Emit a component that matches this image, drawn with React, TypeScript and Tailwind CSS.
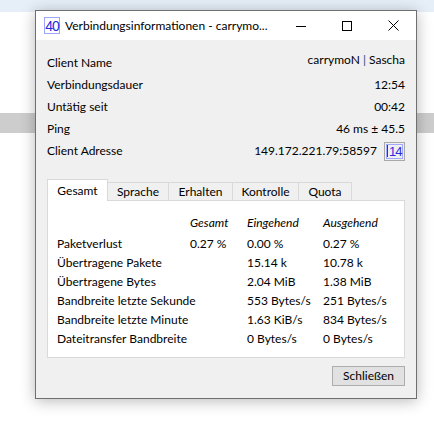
import React from "react";

const font = { fontFamily: 'Lato, "Liberation Sans", Arial, sans-serif' };

const infoRows: { label: string; value: React.ReactNode; top?: boolean }[] = [
  { label: "Client Name", value: <span>carrymoN <span className="text-[#2c4a7a]">|</span> Sascha</span>, top: true },
  { label: "Verbindungsdauer", value: "12:54" },
  { label: "Untätig seit", value: "00:42" },
  { label: "Ping", value: "46 ms ± 45.5" },
];

const tabs = ["Gesamt", "Sprache", "Erhalten", "Kontrolle", "Quota"];

const stats: [string, string, string, string][] = [
  ["Paketverlust", "0.27 %", "0.00 %", "0.27 %"],
  ["Übertragene Pakete", "", "15.14 k", "10.78 k"],
  ["Übertragene Bytes", "", "2.04 MiB", "1.38 MiB"],
  ["Bandbreite letzte Sekunde", "", "553 Bytes/s", "251 Bytes/s"],
  ["Bandbreite letzte Minute", "", "1.63 KiB/s", "834 Bytes/s"],
  ["Dateitransfer Bandbreite", "", "0 Bytes/s", "0 Bytes/s"],
];

function TitleBar() {
  return (
    <div className="flex h-[29px] items-center whitespace-nowrap bg-white">
      <div className="ml-[8px] flex h-[17px] w-[16px] items-center justify-center border border-[#9da6ff] font-['Liberation_Sans',sans-serif] text-[14px] leading-none tracking-[-1px] text-[#2a2ae0]">
        40
      </div>
      <span className="ml-[5px] text-[12px] text-black">Verbindungsinformationen - carrymo...</span>
      <div className="ml-auto flex h-full">
        <div className="flex w-[46px] items-center justify-center">
          <svg width="10" height="10" viewBox="0 0 10 10">
            <path d="M0 5.5H10" stroke="#000" strokeWidth="1" />
          </svg>
        </div>
        <div className="flex w-[46px] items-center justify-center">
          <svg width="10" height="10" viewBox="0 0 10 10">
            <rect x="0.5" y="0.5" width="9" height="9" fill="none" stroke="#000" strokeWidth="1" />
          </svg>
        </div>
        <div className="flex w-[46px] items-center justify-center">
          <svg width="11" height="11" viewBox="0 0 11 11">
            <path d="M0.5 0.5L10.5 10.5M10.5 0.5L0.5 10.5" stroke="#000" strokeWidth="1" />
          </svg>
        </div>
      </div>
    </div>
  );
}

export default function App() {
  return (
    <div className="relative h-[430px] w-[434px] overflow-hidden whitespace-nowrap bg-white" style={font}>
      {/* desktop behind the dialog */}
      <div className="absolute left-0 top-0 h-[12px] w-full bg-[#e6eef8]" />
      <div className="absolute left-0 top-[113px] h-[20px] w-full bg-[#cdcdcd]" />

      <div className="relative ml-[35px] mt-[10px] flex h-[389px] w-[382px] flex-col border border-[#6f6f6f] bg-[#f0f0f0] text-[12px] text-black shadow-[0_2px_14px_rgba(0,0,0,0.28)]">
        <TitleBar />

        <div className="flex flex-col px-[11px] pt-[12px]">
          {infoRows.map((r) => (
            <div key={r.label} className="flex h-[22px] justify-between">
              <span className="self-center">{r.label}</span>
              <span className={r.top ? "-mt-[1px] self-start" : "self-center"}>{r.value}</span>
            </div>
          ))}
          <div className="flex h-[22px] items-center justify-between">
            <span>Client Adresse</span>
            <div className="flex items-center">
              <span>149.172.221.79:58597</span>
              <div className="ml-[7px] flex h-[19px] w-[21px] items-center border border-[#a8a8a8] p-[1px]">
                <div className="flex h-full w-full items-center border border-[#a0a8ff] font-['Liberation_Sans',sans-serif] text-[13px] leading-none tracking-[-1px] text-[#2a2ae0]">
                  <span className="h-[12px] w-[1px] bg-[#2a2ae0]" />
                  <span className="ml-[1px]">14</span>
                </div>
              </div>
            </div>
          </div>

          {/* tabs */}
          <div className="mt-[17px] flex h-[21px] items-end">
            {tabs.map((t, i) =>
              i === 0 ? (
                <div key={t} className="relative z-10 -mb-[1px] flex h-[22px] w-[61px] items-center justify-center border border-b-0 border-[#d9d9d9] bg-white">
                  {t}
                </div>
              ) : (
                <div
                  key={t}
                  className={`flex h-[18px] items-center justify-center border border-b-0 border-l-0 border-[#d9d9d9] bg-[#f0f0f0] ${
                    i === 1 ? "w-[61px]" : i === 2 ? "w-[64px]" : i === 3 ? "w-[66px]" : "w-[53px]"
                  }`}
                >
                  {t}
                </div>
              )
            )}
          </div>
          <div className="flex h-[158px] flex-col border border-[#d9d9d9] bg-white px-[9px] pt-[12px]">
            <div className="grid h-[19px] grid-cols-[133px_57px_76px_1fr] items-center italic">
              <span />
              <span>Gesamt</span>
              <span>Eingehend</span>
              <span>Ausgehend</span>
            </div>
            <div className="mt-[2px] flex flex-col">
              {stats.map((s) => (
                <div key={s[0]} className="grid h-[19px] grid-cols-[133px_57px_76px_1fr] items-center">
                  {s.map((c, i) => (
                    <span key={i}>{c}</span>
                  ))}
                </div>
              ))}
            </div>
          </div>

          <div className="mt-[8px] flex justify-end">
            <button className="flex h-[20px] w-[73px] items-center justify-center border border-[#adadad] bg-[#e1e1e1] text-[12px]">
              Schließen
            </button>
          </div>
        </div>
      </div>
    </div>
  );
}
